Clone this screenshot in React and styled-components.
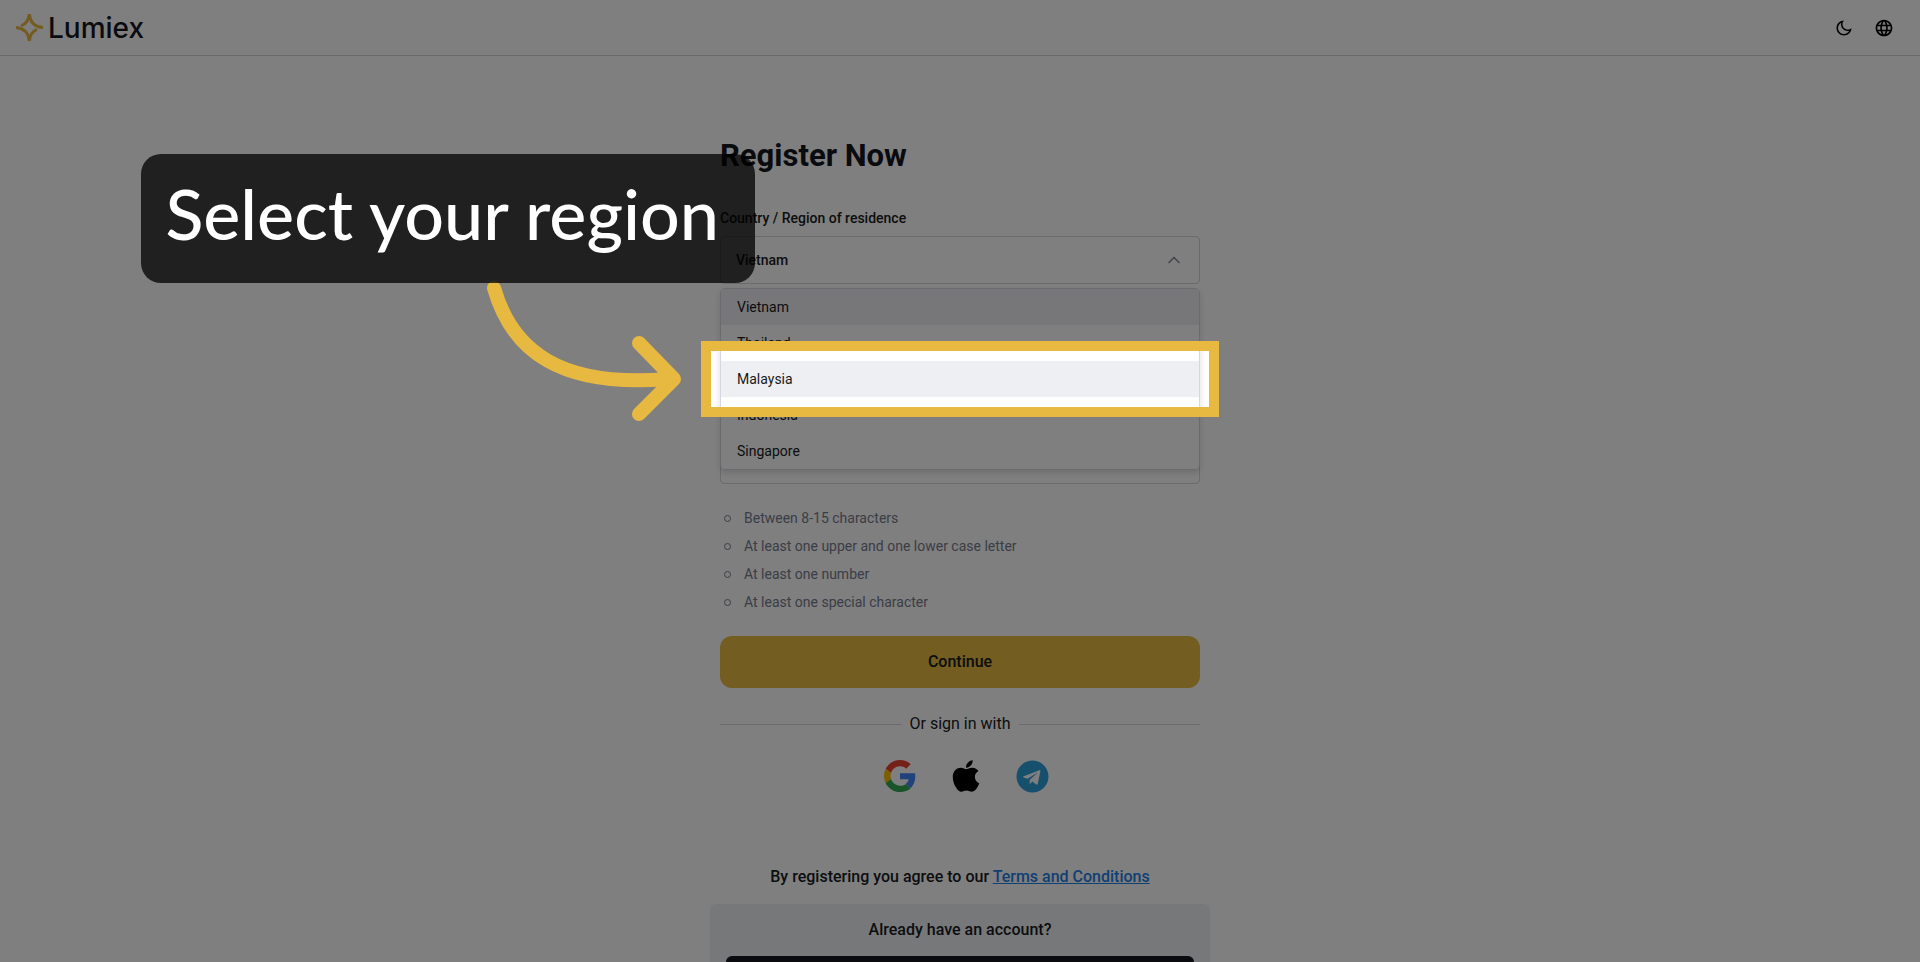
import React from "react";
import styled, { createGlobalStyle } from "styled-components";
import { FaApple, FaTelegram } from "react-icons/fa";
import { MdLanguage } from "react-icons/md";
import { RiMoonLine } from "react-icons/ri";
import { FiChevronUp } from "react-icons/fi";

const regions = ["Vietnam", "Thailand", "Malaysia", "Indonesia", "Singapore"];

const rules = [
  "Between 8-15 characters",
  "At least one upper and one lower case letter",
  "At least one number",
  "At least one special character",
];

function Logo() {
  return (
    <Brand href="#">
      <svg width="27" height="27" viewBox="0 0 27 27" fill="none" stroke="#e8b940" strokeWidth="3">
        <path d="M5 11.8C10 10 12.6 6.500 13.300 0C14 7.500 18 12.800 27 13.500" />
        <path d="M0 13.500C8 14.300 12.600 18 13.300 27C14 20.500 16 17.500 21 15.400" />
      </svg>
      Lumiex
    </Brand>
  );
}

function GoogleIcon() {
  return (
    <svg width="32" height="32" viewBox="0 0 48 48">
      <path fill="#EA4335" d="M24 9.5c3.54 0 6.71 1.22 9.21 3.6l6.85-6.85C35.9 2.38 30.47 0 24 0 14.62 0 6.51 5.38 2.56 13.22l7.98 6.19C12.43 13.72 17.74 9.5 24 9.5z" />
      <path fill="#4285F4" d="M46.98 24.55c0-1.57-.15-3.09-.38-4.55H24v9.02h12.94c-.58 2.96-2.26 5.48-4.78 7.18l7.73 6c4.51-4.18 7.09-10.36 7.09-17.65z" />
      <path fill="#FBBC05" d="M10.53 28.59c-.48-1.45-.76-2.99-.76-4.59s.27-3.14.76-4.59l-7.98-6.19C.92 16.46 0 20.12 0 24c0 3.88.92 7.54 2.56 10.78l7.97-6.19z" />
      <path fill="#34A853" d="M24 48c6.48 0 11.93-2.13 15.89-5.81l-7.73-6c-2.15 1.45-4.92 2.3-8.16 2.3-6.26 0-11.57-4.22-13.47-9.91l-7.98 6.19C6.51 42.62 14.62 48 24 48z" />
    </svg>
  );
}

function RegionField() {
  return (
    <Field>
      <label htmlFor="region">Country / Region of residence</label>
      <SelectBox>
        <select id="region" defaultValue="Vietnam">
          {regions.map((region) => (
            <option key={region}>{region}</option>
          ))}
        </select>
        <FiChevronUp size={20} />
      </SelectBox>
      <Menu role="listbox" aria-label="Regions">
        {regions.map((region) => (
          <MenuItem
            key={region}
            role="option"
            aria-selected={region === "Vietnam"}
            $active={region === "Vietnam" || region === "Malaysia"}
          >
            {region}
          </MenuItem>
        ))}
      </Menu>
    </Field>
  );
}

function Guide() {
  return (
    <>
      <Spotlight />
      <Arrow width="204" height="156" viewBox="0 0 204 156">
        <path d="M14 17C32 80 80 117 188 108" />
        <path d="M159 72L194 108L159 143" />
      </Arrow>
      <Callout>Select your region</Callout>
    </>
  );
}

function App() {
  return (
    <>
      <GlobalStyle />
      <Header>
        <Logo />
        <HeaderActions>
          <IconButton aria-label="Dark mode">
            <RiMoonLine size={18} />
          </IconButton>
          <IconButton aria-label="Language">
            <MdLanguage size={20} />
          </IconButton>
        </HeaderActions>
      </Header>
      <Main>
        <h1>Register Now</h1>
        <Fields>
          <RegionField />
          <TextInput type="email" aria-label="Email" />
          <TextInput type="password" aria-label="Password" />
        </Fields>
        <Rules>
          {rules.map((rule) => (
            <li key={rule}>{rule}</li>
          ))}
        </Rules>
        <PrimaryButton>Continue</PrimaryButton>
        <Divider>Or sign in with</Divider>
        <Socials>
          <IconButton aria-label="Google">
            <GoogleIcon />
          </IconButton>
          <IconButton aria-label="Apple">
            <FaApple size={36} />
          </IconButton>
          <IconButton aria-label="Telegram">
            <FaTelegram size={33} color="#2ca0d9" />
          </IconButton>
        </Socials>
        <Terms>
          By registering you agree to our <a href="#">Terms and Conditions</a>
        </Terms>
        <LoginBox>
          Already have an account?
          <LoginButton aria-label="Log in" />
        </LoginBox>
        <Guide />
      </Main>
    </>
  );
}

const GlobalStyle = createGlobalStyle`
  * {
    box-sizing: border-box;
  }
  html {
    scrollbar-width: none;
  }
  body {
    margin: 0;
    background: #ffffff;
    color: #181a20;
    font-family: Roboto, "Liberation Sans", sans-serif;
    font-size: 16px;
    line-height: 24px;
    overflow-x: hidden;
  }
  button, input, select {
    font: inherit;
    color: inherit;
  }
`;

const Header = styled.header`
  display: flex;
  align-items: center;
  justify-content: space-between;
  height: 56px;
  padding: 0 26px 0 16px;
  border-bottom: 1px solid #d6d6d9;
`;

const Brand = styled.a`
  display: flex;
  align-items: center;
  gap: 5px;
  color: #14161e;
  font-family: Inter, sans-serif;
  font-size: 28px;
  font-weight: 500;
  text-decoration: none;
`;

const HeaderActions = styled.div`
  display: flex;
  align-items: center;
  gap: 21px;
`;

const IconButton = styled.button`
  display: flex;
  padding: 0;
  border: 0;
  background: none;
  color: #000000;
`;

const Main = styled.main`
  position: relative;
  width: 480px;
  margin: 0 auto;
  padding: 80px 0 32px;

  & > h1 {
    margin: 0 0 32px;
    font-size: 31px;
    line-height: 40px;
    font-weight: 700;
    color: #14161e;
  }
`;

const Fields = styled.div`
  display: flex;
  flex-direction: column;
  gap: 52px;
`;

const Field = styled.div`
  position: relative;

  & > label {
    display: block;
    height: 28px;
    line-height: 20px;
    font-size: 14px;
    font-weight: 500;
  }
`;

const SelectBox = styled.div`
  display: flex;
  align-items: center;
  height: 48px;
  padding: 0 15px;
  border: 1px solid #d5d6df;
  border-radius: 4px;
  color: #8a8d9c;

  & > select {
    flex: 1;
    appearance: none;
    padding: 0;
    border: 0;
    background: none;
    color: #181a20;
    font-size: 14px;
    font-weight: 500;
  }
`;

const TextInput = styled.input`
  width: 100%;
  height: 48px;
  padding: 0 16px;
  border: 1px solid #d5d6df;
  border-radius: 4px;
`;

const Menu = styled.ul`
  position: absolute;
  z-index: 1;
  top: 80px;
  left: 0;
  right: 0;
  margin: 0;
  padding: 0;
  list-style: none;
  background: #ffffff;
  border: 1px solid #d5d6df;
  border-radius: 5px;
  box-shadow: 0 3px 6px rgba(0, 0, 0, 0.14);
  overflow: hidden;
`;

const MenuItem = styled.li`
  padding: 0 16px;
  font-size: 14px;
  line-height: 36px;
  background: ${(props) => (props.$active ? "#eeeff3" : "#ffffff")};
`;

const Rules = styled.ul`
  margin: 20px 0;
  padding: 0 0 0 4px;
  list-style: none;
  font-size: 14px;
  line-height: 28px;
  color: #767a8e;

  & li {
    display: flex;
    align-items: center;
    gap: 13px;
  }
  & li::before {
    content: "";
    width: 7px;
    height: 7px;
    border: 1px solid #767a8e;
    border-radius: 50%;
    box-sizing: border-box;
  }
`;

const PrimaryButton = styled.button`
  display: block;
  width: 100%;
  height: 52px;
  border: 0;
  border-radius: 12px;
  background: #e6ba40;
  font-weight: 500;
`;

const Divider = styled.div`
  display: flex;
  align-items: center;
  gap: 8px;
  margin: 24px 0;

  &::before,
  &::after {
    content: "";
    flex: 1;
    height: 1px;
    background: #d6d6d9;
  }
`;

const Socials = styled.div`
  display: flex;
  align-items: center;
  justify-content: center;
  gap: 32px;
  height: 32px;
  padding-left: 12px;
`;

const Terms = styled.p`
  margin: 73px 0 15px;
  text-align: center;
  font-weight: 500;

  & a {
    color: #1f80e8;
  }
`;

const LoginBox = styled.div`
  display: flex;
  flex-direction: column;
  gap: 14px;
  margin: 0 -10px;
  padding: 14px 16px 16px;
  border-radius: 6px;
  background: #eff0f4;
  text-align: center;
  font-weight: 500;
`;

const LoginButton = styled.button`
  height: 48px;
  border: 0;
  border-radius: 6px;
  background: #14161e;
`;

/* dims the whole page around the highlighted option */
const Spotlight = styled.div`
  position: absolute;
  z-index: 2;
  top: 285px;
  left: -19px;
  right: -19px;
  height: 76px;
  border: 10px solid #e8b940;
  box-shadow: 0 0 0 4000px rgba(0, 0, 0, 0.5);
  pointer-events: none;
`;

const Arrow = styled.svg`
  position: absolute;
  z-index: 3;
  top: 215px;
  left: -240px;
  fill: none;
  stroke: #e8b940;
  stroke-width: 14px;
  stroke-linecap: round;
  stroke-linejoin: round;
`;

const Callout = styled.div`
  position: absolute;
  z-index: 4;
  top: 98px;
  right: 445px;
  padding: 0 36px 10px 24px;
  border-radius: 20px;
  background: rgba(0, 0, 0, 0.75);
  color: #ffffff;
  font-family: Lato, sans-serif;
  font-size: 70px;
  font-weight: 500;
  line-height: 119px;
  white-space: nowrap;
`;

export default App;
